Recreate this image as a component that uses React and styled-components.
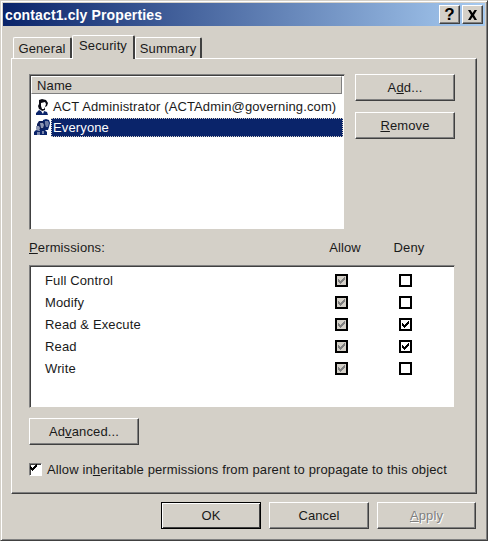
import styled, { createGlobalStyle } from "styled-components";

const GlobalStyle = createGlobalStyle`
  html, body {
    margin: 0;
    padding: 0;
    background: #d4d0c8;
  }
  * {
    box-sizing: border-box;
  }
`;

const Window = styled.div`
  width: 488px;
  height: 541px;
  padding: 2px;
  background: #d4d0c8;
  border: 1px solid;
  border-color: #d4d0c8 #404040 #404040 #d4d0c8;
  box-shadow: inset 1px 1px 0 #fff, inset -1px -1px 0 #808080;
  font-family: "Liberation Sans", Arial, sans-serif;
  font-size: 13px;
  letter-spacing: 0.13px;
  color: #1a1a1a;
  display: flex;
  flex-direction: column;
`;

const TitleBar = styled.div`
  height: 23px;
  flex: none;
  display: flex;
  align-items: center;
  justify-content: space-between;
  padding: 0 2px;
  background: linear-gradient(90deg, #0a246a, #a6caf0);
`;

const Title = styled.div`
  color: #fff;
  font-size: 14px;
  font-weight: bold;
`;

const CaptionButtons = styled.div`
  display: flex;
  gap: 2px;
`;

const CaptionButton = styled.div`
  width: 21px;
  height: 19px;
  display: flex;
  align-items: center;
  justify-content: center;
  background: #d4d0c8;
  border: 1px solid;
  border-color: #fff #404040 #404040 #fff;
  box-shadow: inset -1px -1px 0 #808080;
  color: #000;
  font-size: 17px;
  font-weight: bold;
  line-height: 1;
`;

const TabStrip = styled.div`
  display: flex;
  align-items: flex-end;
  height: 32px;
  flex: none;
  padding-left: 10px;
  position: relative;
  z-index: 1;
`;

const Tab = styled.div`
  height: ${(p) => (p.$active ? 24 : 21)}px;
  width: ${(p) => p.$width}px;
  margin-bottom: ${(p) => (p.$active ? -1 : 0)}px;
  padding-top: ${(p) => (p.$active ? 2 : 3)}px;
  text-align: center;
  background: #d4d0c8;
  border-top: 1px solid #fff;
  border-left: 1px solid #fff;
  border-right: 2px solid #404040;
  border-radius: 2px 2px 0 0;
`;

const Panel = styled.div`
  width: 466px;
  height: 436px;
  margin-left: 8px;
  flex: none;
  padding: 15px 20px 0 17px;
  border: 1px solid;
  border-color: #fff #404040 #404040 #fff;
  box-shadow: inset -1px -1px 0 #808080;
`;

const TopRow = styled.div`
  display: flex;
  gap: 10px;
  align-items: flex-start;
`;

const SunkenBox = styled.div`
  background: #fff;
  border: 1px solid;
  border-color: #808080 #d4d0c8 #d4d0c8 #808080;
  box-shadow: inset 1px 1px 0 #404040;
`;

const NameList = styled(SunkenBox)`
  width: 316px;
  height: 156px;
  padding: 1px 1px 0 1px;
`;

const NameHeader = styled.div`
  height: 18px;
  margin: 0 1px 3px 0;
  padding: 1px 0 0 5px;
  background: #d4d0c8;
  border: 1px solid;
  border-color: #fff #808080 #808080 #fff;
`;

const NameRow = styled.div`
  display: flex;
  align-items: center;
  gap: 1px;
  height: 20px;
  padding-left: 3px;
`;

const NameText = styled.div`
  flex: 1;
  height: ${(p) => (p.$selected ? 19 : 20)}px;
  line-height: ${(p) => (p.$selected ? 19 : 20)}px;
  padding-left: 2px;
  white-space: nowrap;
  ${(p) =>
    p.$selected &&
    `
    background: #0a246a;
    color: #fff;
    outline: 1px dotted #d4d0c8;
    outline-offset: -1px;
  `}
`;

const SideButtons = styled.div`
  display: flex;
  flex-direction: column;
  gap: 11px;
`;

const Button = styled.div`
  width: ${(p) => p.$width || 100}px;
  height: 27px;
  display: flex;
  align-items: center;
  justify-content: center;
  background: #d4d0c8;
  color: ${(p) => (p.$disabled ? "#808080" : "#1a1a1a")};
  text-shadow: ${(p) => (p.$disabled ? "1px 1px 0 #fff" : "none")};
  border: 1px solid;
  border-color: ${(p) => (p.$default ? "#000" : "#fff #404040 #404040 #fff")};
  box-shadow: ${(p) =>
    p.$default
      ? "inset 1px 1px 0 #fff, inset -1px -1px 0 #404040"
      : "inset -1px -1px 0 #808080"};
`;

const PermHeader = styled.div`
  display: grid;
  grid-template-columns: 284px 64px 64px;
  margin: 10px 0;
  height: 15px;
  line-height: 15px;
  text-align: center;
`;

const PermLabel = styled.div`
  text-align: left;
`;

const PermBox = styled(SunkenBox)`
  width: 426px;
  height: 143px;
  padding-top: 3px;
`;

const PermRow = styled.div`
  display: grid;
  grid-template-columns: 279px 64px 64px;
  align-items: center;
  height: 22px;
`;

const PermName = styled.div`
  padding-left: 15px;
`;

const CheckCell = styled.div`
  display: flex;
  justify-content: center;
`;

const CheckBox = styled.div`
  width: 13px;
  height: 13px;
  display: flex;
  background: ${(p) => (p.$disabled ? "#d4d0c8" : "#fff")};
  border: 2px solid #000;
`;

const InheritRow = styled.div`
  display: flex;
  align-items: center;
  gap: 5px;
  margin-top: 17px;
`;

const InheritBox = styled.div`
  width: 13px;
  height: 13px;
  display: flex;
  background: #fff;
  border: 1px solid;
  border-color: #808080 #fff #fff #808080;
  box-shadow: inset 1px 1px 0 #404040;
`;

const AdvancedWrap = styled.div`
  margin-top: 10px;
`;

const Footer = styled.div`
  display: flex;
  justify-content: flex-end;
  gap: 8px;
  padding: 8px 9px 0 0;
`;

const Mark = ({ color, offset = 0 }) => (
  <svg
    width="9"
    height="9"
    viewBox={`${offset} ${offset} 9 9`}
    shapeRendering="crispEdges"
  >
    <path d="M7 1h1v3H7v1H6v1H5v1H4v1H3V7H2V6H1V3h1v1h1v1h1V4h1V3h1V2h1z" fill={color} />
  </svg>
);

const PersonIcon = () => (
  <svg width="16" height="16" viewBox="0 0 16 16">
    <path d="M5 1l3-1 4 1 2 3-1 3-2 1v3l-3 1-1-1-2-1-1-3 1-2z" fill="#0b0b14" />
    <path d="M7 4l4-1 1 2-1 3-1 2H8L7 7z" fill="#fff" />
    <path d="M2 16v-2l3-3 2 1h3l3 1 1 3z" fill="#0a246a" />
    <path d="M7 12h3l-1 3z" fill="#fff" />
  </svg>
);

const GroupIcon = () => (
  <svg width="16" height="16" viewBox="0 0 16 16">
    <path d="M9 1l3-1 3 1 1 3-1 4-1 3H8z" fill="#0a246a" />
    <path d="M3 5l2-3h4l2 3v4l-2 2H3z" fill="#10205a" />
    <path d="M6 4h3l1 2-1 3H7z" fill="#8f98b4" />
    <path d="M11 2h3l1 2-1 4h-2l-1-3z" fill="#6f7ca4" />
    <path d="M2 7h3l1 2-1 3H3L2 10z" fill="#8f98b4" />
    <path d="M0 16v-3l2-2 3 1 2-2 4 1 2 2v3z" fill="#0a246a" />
    <path d="M3 13h3v3H3zM8 12h2v3H8z" fill="#7a86ac" />
  </svg>
);

const rows = [
  { name: "Full Control", deny: false },
  { name: "Modify", deny: false },
  { name: "Read & Execute", deny: true },
  { name: "Read", deny: true },
  { name: "Write", deny: false },
];

const App = () => (
  <>
    <GlobalStyle />
    <Window>
      <TitleBar>
        <Title>contact1.cly Properties</Title>
        <CaptionButtons>
          <CaptionButton>?</CaptionButton>
          <CaptionButton>
            <svg width="11" height="10" viewBox="0 0 11 10">
              <path d="M1 0h2.500l2 3 2-3H10L7 5l3 5H7.500l-2-3-2 3H1l3-5z" fill="#000" />
            </svg>
          </CaptionButton>
        </CaptionButtons>
      </TitleBar>
      <TabStrip>
        <Tab $width={59}>General</Tab>
        <Tab $width={63} $active>
          Security
        </Tab>
        <Tab $width={67}>Summary</Tab>
      </TabStrip>
      <Panel>
        <TopRow>
          <NameList>
            <NameHeader>Name</NameHeader>
            <NameRow>
              <PersonIcon />
              <NameText>ACT Administrator (ACTAdmin@governing.com)</NameText>
            </NameRow>
            <NameRow>
              <GroupIcon />
              <NameText $selected>Everyone</NameText>
            </NameRow>
          </NameList>
          <SideButtons>
            <Button>
              A<u>d</u>d...
            </Button>
            <Button>
              <u>R</u>emove
            </Button>
          </SideButtons>
        </TopRow>
        <PermHeader>
          <PermLabel>
            <u>P</u>ermissions:
          </PermLabel>
          <div>Allow</div>
          <div>Deny</div>
        </PermHeader>
        <PermBox>
          {rows.map((row) => (
            <PermRow key={row.name}>
              <PermName>{row.name}</PermName>
              <CheckCell>
                <CheckBox $disabled>
                  <Mark color="#808080" />
                </CheckBox>
              </CheckCell>
              <CheckCell>
                <CheckBox>{row.deny && <Mark color="#000" />}</CheckBox>
              </CheckCell>
            </PermRow>
          ))}
        </PermBox>
        <AdvancedWrap>
          <Button $width={110}>
            Ad<u>v</u>anced...
          </Button>
        </AdvancedWrap>
        <InheritRow>
          <InheritBox>
            <Mark color="#000" offset={1} />
          </InheritBox>
          <div>
            Allow in<u>h</u>eritable permissions from parent to propagate to this object
          </div>
        </InheritRow>
      </Panel>
      <Footer>
        <Button $default>OK</Button>
        <Button>Cancel</Button>
        <Button $disabled $width={99}>
          <u>A</u>pply
        </Button>
      </Footer>
    </Window>
  </>
);

export default App;
